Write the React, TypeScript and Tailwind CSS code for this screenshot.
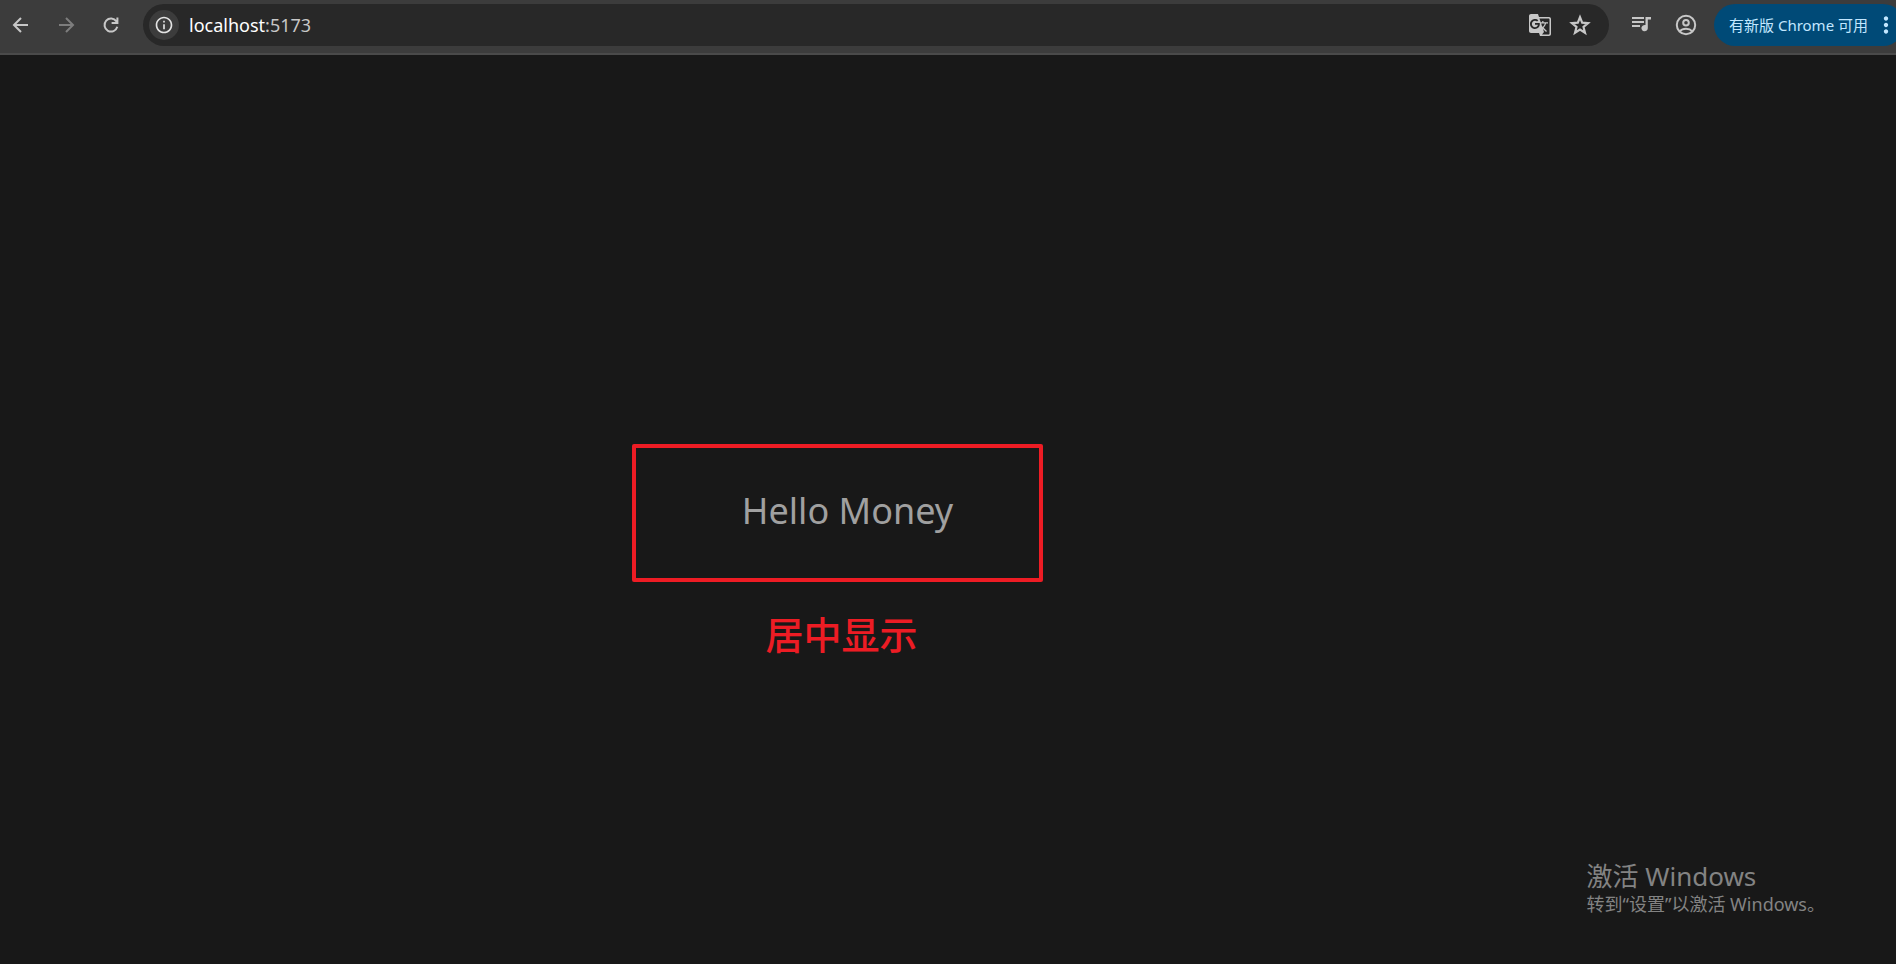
import React from 'react';
import { MdGTranslate, MdMoreVert, MdOutlineInfo } from 'react-icons/md';

interface IconButtonProps {
  label: string;
  className?: string;
  children: React.ReactNode;
}

const IconButton: React.FC<IconButtonProps> = ({ label, className = '', children }) => (
  <button aria-label={label} className={`flex shrink-0 items-center justify-center ${className}`}>
    {children}
  </button>
);

interface LineIconProps {
  className?: string;
  d: string;
}

const LineIcon: React.FC<LineIconProps> = ({ className = 'size-[22px]', d }) => (
  <svg className={className} viewBox="0 0 22 22" fill="none" stroke="currentColor" strokeWidth={2} aria-hidden="true">
    <path d={d} />
  </svg>
);

const MediaIcon: React.FC = () => (
  <svg className="size-6" viewBox="0 0 24 24" fill="currentColor" aria-hidden="true">
    <path d="M2 4h12v2H2zM2 8h12v2H2zM2 12h8v2H2z" />
    <path d="M15.500 4H21v2.400h-3.200v8.800a3.200 3.200 0 1 1-2.300-3.100z" />
  </svg>
);

const ProfileIcon: React.FC = () => (
  <svg className="size-6" viewBox="0 0 24 24" fill="none" stroke="currentColor" strokeWidth={2} aria-hidden="true">
    <circle cx="12" cy="12" r="9.2" />
    <circle cx="12" cy="9.8" r="2.8" />
    <path d="M5.6 18.4c1.6-1.7 3.8-2.6 6.4-2.6s4.8.9 6.4 2.6" />
  </svg>
);

const Toolbar: React.FC = () => (
  <header className="flex h-[55px] items-start overflow-hidden border-b-2 border-[#4a4a4a] bg-[#3c3c3c] pt-1 text-[#c7c7c7]">
    {/* 导航按钮 */}
    <nav className="flex h-[42px] w-[143px] shrink-0 items-center gap-[23px] pl-[10px]">
      <IconButton label="返回">
        <LineIcon d="M18 11H4.500M11 4l-7 7 7 7" />
      </IconButton>
      <IconButton label="前进" className="text-[#7d7d7d]">
        <LineIcon d="M4 11h13.500M11 4l7 7-7 7" />
      </IconButton>
      <IconButton label="重新加载">
        <LineIcon d="M17.300 12.800A6.500 6.500 0 1 1 16.400 7.400l.900 1.100M17.400 3.500v5.600h-5.800" />
      </IconButton>
    </nav>

    {/* 地址栏 */}
    <div className="flex h-[42px] flex-1 items-center rounded-full bg-[#282828] pr-[17px] pl-[6px]">
      <IconButton label="查看网站信息" className="size-[30px] rounded-full bg-[#3c3c3c] text-[#e3e3e3]">
        <MdOutlineInfo className="size-5" />
      </IconButton>
      <div className="ml-[10px] flex-1 text-[18px] leading-6 text-white">
        localhost<span className="text-[#c7c7c7]">:5173</span>
      </div>
      <IconButton label="翻译此页" className="mr-4">
        <MdGTranslate className="size-6" />
      </IconButton>
      <IconButton label="为此标签页添加书签">
        <LineIcon
          className="size-6"
          d="M11 3.800l2 5.100 5.400.4-4.200 3.500 1.400 5.300L11 15.200l-4.600 2.900 1.400-5.300-4.200-3.500 5.400-.4z"
        />
      </IconButton>
    </div>

    {/* 右侧操作 */}
    <div className="flex h-[42px] shrink-0 items-center">
      <IconButton label="控制音乐" className="ml-[21px] size-6">
        <MediaIcon />
      </IconButton>
      <IconButton label="个人资料" className="ml-5 size-6">
        <ProfileIcon />
      </IconButton>
      <button className="-mr-2 ml-4 flex h-[42px] w-[190px] items-center rounded-full bg-[#004a77] pr-[5px] pl-[15px] text-[15px] whitespace-nowrap text-[#c2e7ff]">
        <span className="flex-1 text-left">有新版 Chrome 可用</span>
        <MdMoreVert className="size-[26px]" />
      </button>
    </div>
  </header>
);

const App: React.FC = () => {
  return (
    <div className="flex min-h-screen flex-col bg-[#181818] font-['Noto_Sans','Noto_Sans_CJK_SC',sans-serif]">
      <Toolbar />

      <main className="relative flex flex-1 flex-col items-center justify-center pt-[86px] pr-[221px]">
        <div className="flex h-[138px] w-[411px] items-center justify-center rounded-xs border-4 border-[#ed1c24] pb-1 pl-5">
          <h1 className="text-[36px] leading-[54px] text-[#a0a0a0]">Hello Money</h1>
        </div>
        <p className="mt-6 pl-2 text-[38px] leading-[56px] font-medium text-[#ed1c24]">居中显示</p>

        {/* 系统水印 */}
        <div className="absolute right-[71px] bottom-12 text-[#838383]">
          <p className="text-[26px] leading-8">激活 Windows</p>
          <p className="text-[18px] leading-6">转到“设置”以激活 Windows。</p>
        </div>
      </main>
    </div>
  );
};

export default App;
